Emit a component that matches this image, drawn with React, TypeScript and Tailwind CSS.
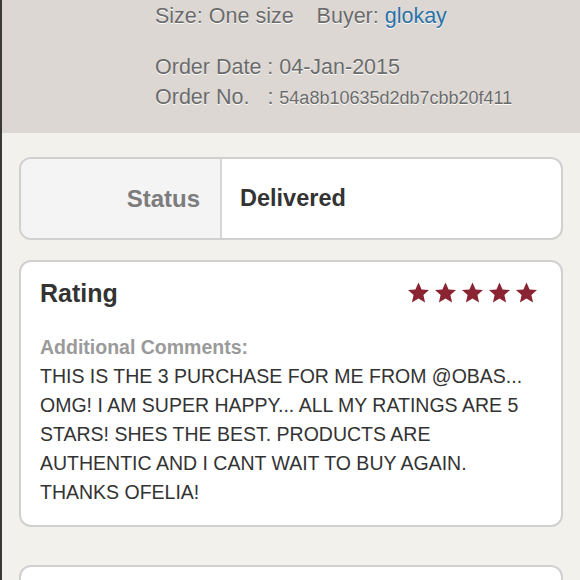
const stars = [0, 1, 2, 3, 4];

const Star = () => (
  <svg width="25" height="24" viewBox="0 0 24 24">
    <path
      d="M12 1.5l3.1 6.9 7.4.7-5.6 5 1.7 7.4L12 17.6l-6.6 3.9 1.7-7.4-5.6-5 7.4-.7z"
      fill="#8a2432"
    />
  </svg>
);

const App = () => {
  return (
    <div className="w-[580px] h-[580px] overflow-hidden bg-[#f3f1ec] border-l-2 border-[#3a3a3a] font-['Liberation_Sans',Arial,sans-serif]">
      <div className="h-[133px] bg-[#dcd7d3] pl-[153px] pt-[3px] text-[#6b6b6b] [text-shadow:0_1px_0_#fff]">
        <div className="text-[21.5px] leading-[26px]">
          Size: One size <span className="ml-[17px]">Buyer:</span> <span className="text-[#2a72a8]">glokay</span>
        </div>
        <div className="text-[21.5px] leading-[30px] mt-[23px]">Order Date : 04-Jan-2015</div>
        <div className="text-[21.5px] leading-[30px]">
          Order No. <span className="ml-[12px]">:</span> <span className="text-[18px]">54a8b10635d2db7cbb20f411</span>
        </div>
      </div>

      <div className="mx-[17px] mt-[24px] h-[83px] flex rounded-[12px] border-2 border-[#d0d0d0] bg-white overflow-hidden">
        <div className="w-[201px] bg-[#f4f4f4] border-r-2 border-[#d6d6d6] flex items-center justify-end pr-[20px] text-[24px] font-bold text-[#7c7c7c]">
          Status
        </div>
        <div className="flex items-center pl-[18px] text-[23.5px] font-bold text-[#333]">Delivered</div>
      </div>

      <div className="mx-[17px] mt-[20px] h-[267px] rounded-[12px] border-2 border-[#d0d0d0] bg-white px-[19px] pt-[16px]">
        <div className="flex items-center justify-between">
          <div className="text-[25px] font-bold text-[#333] leading-[30px]">Rating</div>
          <div className="flex gap-[2px] mr-[3px]">
            {stars.map((s) => (
              <Star key={s} />
            ))}
          </div>
        </div>
        <div className="mt-[28px] text-[19.5px] font-bold text-[#9a9a9a] leading-[22px]">Additional Comments:</div>
        <div className="w-[492px] mt-[4px] text-[19.5px] leading-[29px] text-[#333]">
          THIS IS THE 3 PURCHASE FOR ME FROM @OBAS... OMG! I AM SUPER HAPPY... ALL MY RATINGS ARE 5 STARS! SHES THE BEST. PRODUCTS ARE AUTHENTIC AND I CANT WAIT TO BUY AGAIN. THANKS OFELIA!
        </div>
      </div>

      <div className="mx-[17px] mt-[38px] h-[80px] rounded-[12px] border-2 border-[#d0d0d0] bg-white"></div>
    </div>
  );
};

export default App;
